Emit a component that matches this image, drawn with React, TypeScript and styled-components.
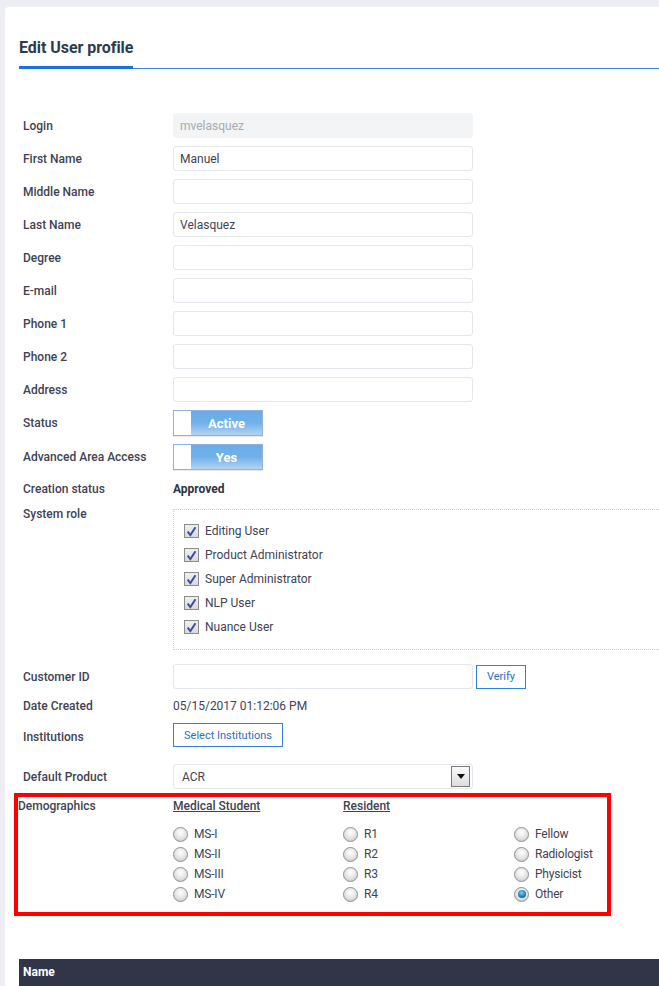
import * as React from "react";
import styled, { createGlobalStyle, css } from "styled-components";

const GlobalStyle = createGlobalStyle`
  html, body {
    margin: 0;
    padding: 0;
    background: #eceef3;
  }
  body {
    font-family: Roboto, "Liberation Sans", Arial, sans-serif;
    color: #3f4254;
  }
  * { box-sizing: border-box; }
`;

const Page = styled.div`
  height: 986px;
  overflow: hidden;
  padding: 7px 0 0 5px;
`;

const Card = styled.div`
  background: #ffffff;
  border-radius: 4px 0 0 0;
  min-height: 1000px;
  padding: 0 0 0 14px;
`;

const TabBar = styled.div`
  display: flex;
  padding-top: 31px;
  border-bottom: 1px solid #3d87e3;
`;

const Tab = styled.div`
  font-size: 16px;
  font-weight: 700;
  color: #2e3a4e;
  letter-spacing: -0.05px;
  padding-bottom: 9px;
  border-bottom: 3px solid #1672e3;
  margin-bottom: -1px;
`;

const Form = styled.div`
  display: flex;
  flex-direction: column;
  gap: 8px;
  padding: 44px 0 0 4px;
`;

const Row = styled.div<{ $top?: number; $start?: boolean }>`
  display: grid;
  grid-template-columns: 150px 1fr;
  align-items: ${(p) => (p.$start ? "start" : "center")};
  margin-top: ${(p) => p.$top ?? 0}px;
`;

const Label = styled.div<{ $pad?: number }>`
  font-size: 12px;
  font-weight: 500;
  line-height: 14px;
  color: #3f4254;
  padding-top: ${(p) => p.$pad ?? 0}px;
`;

const TextInput = styled.input`
  width: 300px;
  height: 25px;
  padding: 0 6px;
  font: 400 12px Roboto, "Liberation Sans", sans-serif;
  color: #3f4254;
  border: 1px solid #e4e6ee;
  border-radius: 3px;
  background: #fff;
  outline: none;

  &:disabled {
    background: #f3f4f6;
    border-color: #f3f4f6;
    color: #a8aab2;
  }
`;

const Toggle = styled.div`
  display: flex;
  width: 90px;
  height: 26px;
  border: 1px solid #8fb1da;
  box-shadow: 0 1px 1px rgba(0, 0, 0, 0.08);
`;

const Knob = styled.div`
  width: 17px;
  background: #fff;
`;

const ToggleFace = styled.div`
  flex: 1;
  display: flex;
  align-items: center;
  justify-content: center;
  background: linear-gradient(#69ace8, #71b1ea 50%, #b3d3f1);
  color: #fff;
  font-size: 13px;
  font-weight: 700;
`;

const Value = styled.div<{ $bold?: boolean }>`
  font-size: 12px;
  line-height: 18px;
  font-weight: ${(p) => (p.$bold ? 700 : 400)};
  color: ${(p) => (p.$bold ? "#2f3342" : "#3f4254")};
`;

const RoleBox = styled.div`
  margin-top: 5px;
  height: 141px;
  border: 1px dotted #c9ccd3;
  border-right: none;
  padding: 14px 0 0 10px;
  display: flex;
  flex-direction: column;
  gap: 10px;
`;

const CheckRow = styled.label`
  display: flex;
  align-items: center;
  gap: 6px;
  font-size: 12px;
  line-height: 14px;
  color: #3f4254;
`;

const CheckBox = styled.span`
  flex-shrink: 0;
  width: 15px;
  height: 14px;
  border: 1px solid #8c8c8c;
  background: linear-gradient(#f0f0f0, #d9d9d9);
  display: flex;
  align-items: center;
  justify-content: center;
`;

const Inline = styled.div`
  display: flex;
  gap: 3px;
  align-items: center;
`;

const OutlineButton = styled.button<{ $w: number }>`
  width: ${(p) => p.$w}px;
  height: 24px;
  border: 1px solid #2f80e4;
  background: #fff;
  color: #2a6ec9;
  font: 400 11px Roboto, "Liberation Sans", sans-serif;
  padding: 0;
  cursor: pointer;
`;

const Select = styled.div`
  width: 300px;
  height: 25px;
  border: 1px solid #e4e6ee;
  border-radius: 3px;
  display: flex;
  align-items: center;
  justify-content: space-between;
  padding: 0 2px 0 8px;
  font-size: 12px;
  color: #3f4254;
`;

const SelectArrow = styled.span`
  width: 19px;
  height: 21px;
  border: 1px solid #7a7a7a;
  background: linear-gradient(#fafafa, #dcdcdc);
  display: flex;
  align-items: center;
  justify-content: center;

  &::after {
    content: "";
    border-left: 4px solid transparent;
    border-right: 4px solid transparent;
    border-top: 5px solid #111;
  }
`;

const Highlight = styled.div`
  margin: 4px 0 0 -5px;
  width: 597px;
  border: 4px solid #ff0000;
  display: grid;
  grid-template-columns: 155px 170px 171px 1fr;
  padding: 2px 0 8px 0;
`;

const DemoLabel = styled.div`
  font-size: 12px;
  font-weight: 500;
  line-height: 14px;
`;

const DemoColumn = styled.div`
  display: flex;
  flex-direction: column;
`;

const DemoHeading = styled.div`
  height: 14px;
  font-size: 12px;
  font-weight: 500;
  line-height: 14px;
  text-decoration: underline;
  margin-bottom: 11px;
`;

const RadioRow = styled.label`
  display: flex;
  align-items: center;
  height: 20px;
  gap: 6px;
  font-size: 12px;
  letter-spacing: -0.2px;
  color: #3f4254;
`;

const Radio = styled.span<{ $on?: boolean }>`
  flex-shrink: 0;
  width: 15px;
  height: 15px;
  border-radius: 50%;
  border: 1px solid #8e8e8e;
  background: radial-gradient(circle at 50% 35%, #ffffff, #e0e0e0 60%, #bdbdbd);
  display: flex;
  align-items: center;
  justify-content: center;

  ${(p) =>
    p.$on &&
    css`
      &::after {
        content: "";
        width: 8px;
        height: 8px;
        border-radius: 50%;
        background: radial-gradient(circle at 45% 35%, #7fd0f5, #1679b6 60%, #0b3e66);
      }
    `}
`;

const TableHead = styled.div`
  margin-top: 43px;
  background: #303548;
  color: #fff;
  font-size: 12px;
  font-weight: 700;
  padding: 6px 4px 12px;
  line-height: 14px;
`;

const Check = () => (
  <svg width="11" height="11" viewBox="0 0 10 10">
    <path d="M1.5 5.2 L4 8.2 L8.6 1.2" fill="none" stroke="#3a4ba0" strokeWidth="1.8" />
  </svg>
);

const textFields: [string, string][] = [
  ["First Name", "Manuel"],
  ["Middle Name", ""],
  ["Last Name", "Velasquez"],
  ["Degree", ""],
  ["E-mail", ""],
  ["Phone 1", ""],
  ["Phone 2", ""],
  ["Address", ""],
];

const roles = ["Editing User", "Product Administrator", "Super Administrator", "NLP User", "Nuance User"];

const demoColumns: { title: string; options: string[]; selected?: string }[] = [
  { title: "Medical Student", options: ["MS-I", "MS-II", "MS-III", "MS-IV"] },
  { title: "Resident", options: ["R1", "R2", "R3", "R4"] },
  { title: "", options: ["Fellow", "Radiologist", "Physicist", "Other"], selected: "Other" },
];

export default function App() {
  return (
    <>
      <GlobalStyle />
      <Page>
        <Card>
          <TabBar>
            <Tab>Edit User profile</Tab>
          </TabBar>
          <Form>
            <Row>
              <Label>Login</Label>
              <TextInput disabled defaultValue="mvelasquez" />
            </Row>
            {textFields.map(([label, value]) => (
              <Row key={label}>
                <Label>{label}</Label>
                <TextInput defaultValue={value} />
              </Row>
            ))}
            <Row>
              <Label>Status</Label>
              <Toggle>
                <Knob />
                <ToggleFace>Active</ToggleFace>
              </Toggle>
            </Row>
            <Row>
              <Label>Advanced Area Access</Label>
              <Toggle>
                <Knob />
                <ToggleFace>Yes</ToggleFace>
              </Toggle>
            </Row>
            <Row $top={2}>
              <Label>Creation status</Label>
              <Value $bold>Approved</Value>
            </Row>
            <Row $start $top={-2}>
              <Label $pad={3}>System role</Label>
              <RoleBox>
                {roles.map((r) => (
                  <CheckRow key={r}>
                    <CheckBox>
                      <Check />
                    </CheckBox>
                    {r}
                  </CheckRow>
                ))}
              </RoleBox>
            </Row>
            <Row $top={6}>
              <Label>Customer ID</Label>
              <Inline>
                <TextInput />
                <OutlineButton $w={50}>Verify</OutlineButton>
              </Inline>
            </Row>
            <Row>
              <Label>Date Created</Label>
              <Value>05/15/2017 01:12:06 PM</Value>
            </Row>
            <Row>
              <Label $pad={3}>Institutions</Label>
              <Inline>
                <OutlineButton $w={110}>Select Institutions</OutlineButton>
              </Inline>
            </Row>
            <Row $top={9}>
              <Label>Default Product</Label>
              <Select>
                ACR
                <SelectArrow />
              </Select>
            </Row>
          </Form>
          <Highlight>
            <DemoLabel>Demographics</DemoLabel>
            {demoColumns.map((col, i) => (
              <DemoColumn key={i}>
                <DemoHeading>{col.title}</DemoHeading>
                {col.options.map((o) => (
                  <RadioRow key={o}>
                    <Radio $on={col.selected === o} />
                    {o}
                  </RadioRow>
                ))}
              </DemoColumn>
            ))}
          </Highlight>
          <TableHead>Name</TableHead>
        </Card>
      </Page>
    </>
  );
}
